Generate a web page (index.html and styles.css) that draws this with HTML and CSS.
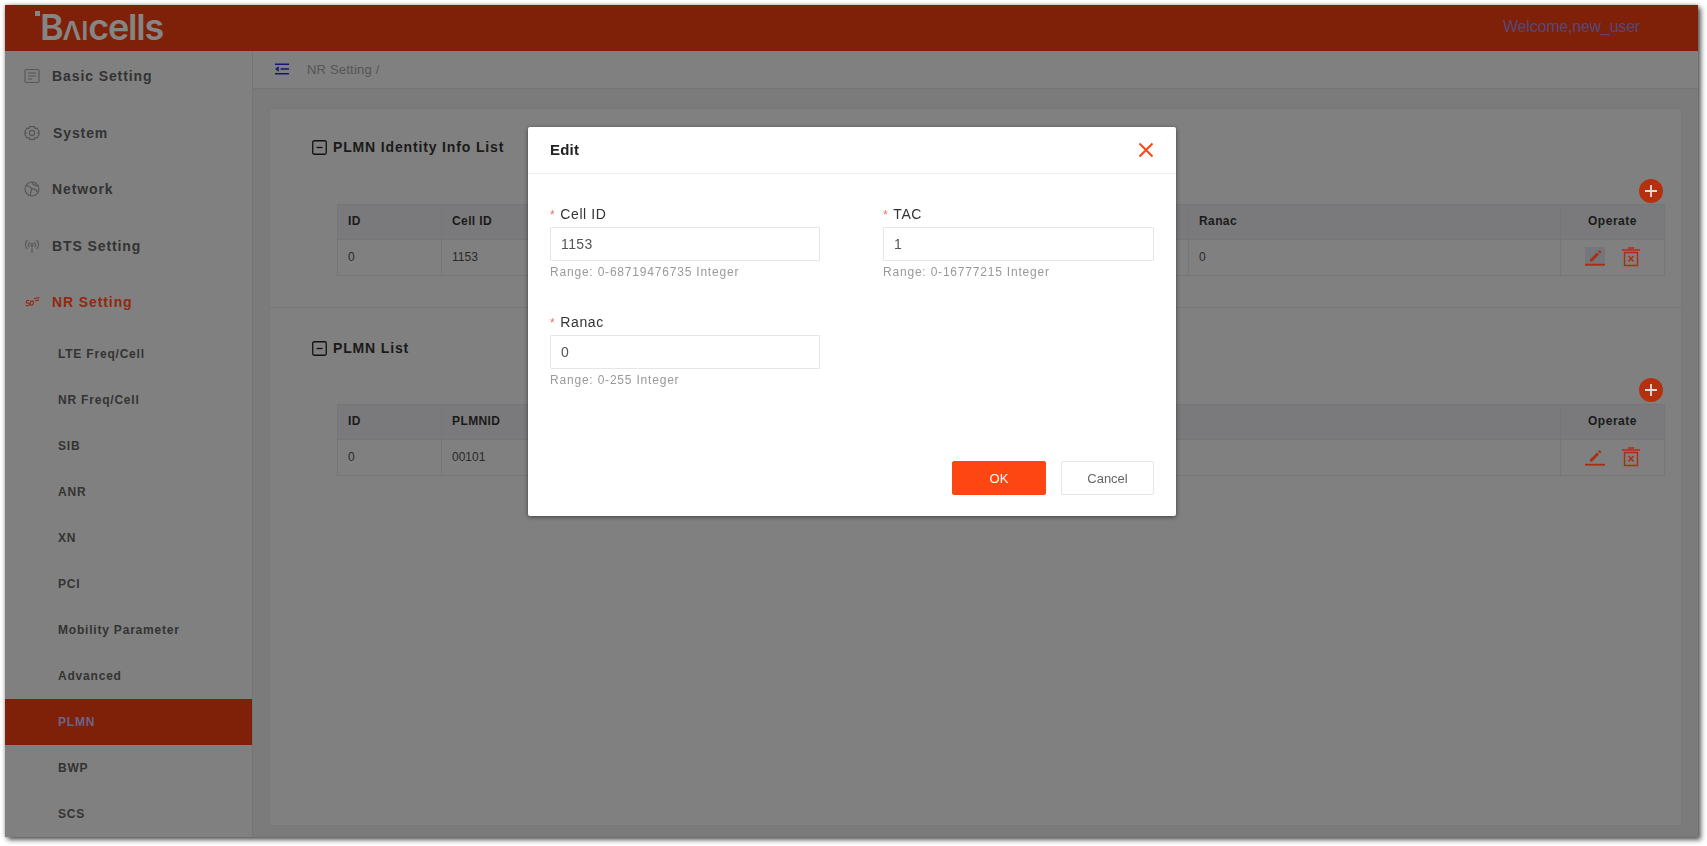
FILE: index.html
```html
<!DOCTYPE html>
<html lang="en">
<head>
<meta charset="utf-8">
<title>NR Setting</title>
<link rel="stylesheet" href="styles.css">
</head>
<body>
<div class="app">
  <header class="topbar">
    <div class="logo"><span class="logo-dot"></span><span class="logo-b">B</span><span class="logo-a">Λ</span><span class="logo-i">I</span>cells</div>
    <div class="welcome">Welcome,new_user</div>
  </header>
  <div class="body-row">
    <nav class="sidebar">
      <a class="nav-item"><svg class="nav-icon" viewBox="0 0 16 16"><rect x="1" y="1.5" width="14" height="13" rx="1.5"/><path d="M4 5h8M4 8h8M4 11h4"/></svg>Basic Setting</a>
      <a class="nav-item"><svg class="nav-icon" viewBox="0 0 16 16"><path d="M5.600 1.600h4.800l.7 2 2-.4 2.200 3.600-1.400 1.200 1.400 1.200-2.200 3.600-2-.4-.7 2H5.600l-.7-2-2 .4L.7 9.200 2.100 8 .7 6.800l2.200-3.600 2 .4z"/><circle cx="8" cy="8" r="2.600"/></svg><span class="nudge">System</span></a>
      <a class="nav-item"><svg class="nav-icon" viewBox="0 0 16 16"><circle cx="8" cy="8" r="7"/><path d="M2 4.500c3 .5 5 1.500 5.500 3.500S6 11 6.500 14.500M8 1.500c.5 2 2 3 6.500 3.500M7.500 8c2.500-.5 5 .5 6 3"/></svg>Network</a>
      <a class="nav-item"><svg class="nav-icon" viewBox="0 0 16 16"><circle cx="8" cy="6.500" r="1.200"/><path d="M8 7.500V15M5.600 3.800a3.600 3.600 0 0 0 0 5.400M10.400 3.800a3.600 3.600 0 0 1 0 5.400M3.400 2a6.200 6.200 0 0 0 0 9M12.600 2a6.200 6.200 0 0 1 0 9"/></svg>BTS Setting</a>
      <a class="nav-item is-open"><svg class="nav-icon icon-5g" viewBox="0 0 16 16"><path d="M5.500 6.500H2.800L2.300 9h2c1 0 1.200 1.200.8 2-.4.700-2 .9-3.600.4M9 7c-2-.6-2.700 1-2.800 2.300-.1 1.300.7 2.200 1.800 1.900 1.300-.300 1.800-2.200 1-4.200M10 5c2-1 3.500-1.200 5.500-1.200M11 7c1.500-.7 2.500-.9 4-.9"/></svg>NR Setting</a>
      <ul class="subnav">
        <li class="sub-item">LTE Freq/Cell</li>
        <li class="sub-item">NR Freq/Cell</li>
        <li class="sub-item">SIB</li>
        <li class="sub-item">ANR</li>
        <li class="sub-item">XN</li>
        <li class="sub-item">PCI</li>
        <li class="sub-item">Mobility Parameter</li>
        <li class="sub-item">Advanced</li>
        <li class="sub-item is-active">PLMN</li>
        <li class="sub-item">BWP</li>
        <li class="sub-item">SCS</li>
      </ul>
    </nav>
    <main class="main">
      <div class="crumbs">
        <svg class="collapse" viewBox="0 0 16 12"><path d="M0 1h15M6 6h9M0 11h15" /><path class="fill" d="M0 6l4-3v6z"/></svg>
        <span>NR Setting /</span>
      </div>
      <div class="content">
        <div class="card">
          <section class="section first">
            <h2 class="section-title"><svg class="minus" viewBox="0 0 15 15"><rect x=".75" y=".75" width="13.500" height="13.500" rx="1.500"/><path d="M4.500 7.500h6"/></svg>PLMN Identity Info List</h2>
            <div class="add-row"><span class="add"><svg viewBox="0 0 24 24"><path d="M12 6v12M6 12h12"/></svg></span></div>
            <table class="grid">
              <tr><th class="c-id">ID</th><th class="c-b">Cell ID</th><th>TAC</th><th class="c-r">Ranac</th><th class="c-op">Operate</th></tr>
              <tr><td>0</td><td>1153</td><td>1</td><td>0</td><td class="c-op ops"><svg class="pen" viewBox="0 0 20 19"><rect class="pen-bg" x="0" y="0" width="20" height="19"/><path class="pen-tip" d="M5 12.500l7-7 2 2-7 7H5zM13 4.500l1.500-1.500 2 2L15 6.500z"/><path class="pen-line" d="M0 17.700h20"/></svg><svg class="bin" viewBox="0 0 20 20"><path d="M1 3h18M7 1h6M3.500 5.500h13v13h-13zM7.500 9l5 5.500M12.500 9l-5 5.500"/></svg></td></tr>
            </table>
          </section>
          <section class="section second">
            <h2 class="section-title"><svg class="minus" viewBox="0 0 15 15"><rect x=".75" y=".75" width="13.500" height="13.500" rx="1.500"/><path d="M4.500 7.500h6"/></svg>PLMN List</h2>
            <div class="add-row"><span class="add"><svg viewBox="0 0 24 24"><path d="M12 6v12M6 12h12"/></svg></span></div>
            <table class="grid">
              <tr><th class="c-id">ID</th><th class="c-b2">PLMNID</th><th class="c-op">Operate</th></tr>
              <tr><td>0</td><td>00101</td><td class="c-op ops"><svg class="pen" viewBox="0 0 20 19"><path class="pen-tip" d="M5 12.500l7-7 2 2-7 7H5zM13 4.500l1.500-1.500 2 2L15 6.500z"/><path class="pen-line" d="M0 17.700h20"/></svg><svg class="bin" viewBox="0 0 20 20"><path d="M1 3h18M7 1h6M3.500 5.500h13v13h-13zM7.500 9l5 5.500M12.500 9l-5 5.500"/></svg></td></tr>
            </table>
          </section>
        </div>
      </div>
    </main>
  </div>
</div>

<div class="modal" role="dialog">
  <div class="modal-head">
    <span class="modal-title">Edit</span>
    <svg class="close" viewBox="0 0 16 16"><path d="M1.500 1.500l13 13M14.500 1.500l-13 13"/></svg>
  </div>
  <form class="modal-body">
    <div class="field">
      <label class="field-label"><span class="req">*</span>Cell ID</label>
      <input class="field-input" value="1153">
      <div class="hint">Range: 0-68719476735 Integer</div>
    </div>
    <div class="field">
      <label class="field-label"><span class="req">*</span>TAC</label>
      <input class="field-input" value="1">
      <div class="hint">Range: 0-16777215 Integer</div>
    </div>
    <div class="field">
      <label class="field-label"><span class="req">*</span>Ranac</label>
      <input class="field-input" value="0">
      <div class="hint">Range: 0-255 Integer</div>
    </div>
  </form>
  <div class="modal-foot">
    <button class="btn btn-ok" type="button">OK</button>
    <button class="btn btn-cancel" type="button">Cancel</button>
  </div>
</div>
</body>
</html>
```

FILE: styles.css
```css
* { box-sizing: border-box; }
html, body { height: 100%; overflow: hidden; }
body {
  margin: 0;
  padding: 5px 9px 9px 5px;
  background: #fff;
  font-family: "Liberation Sans", Arial, sans-serif;
  color: #333;
}
.app {
  height: 832px;
  display: flex;
  flex-direction: column;
  background: #808080;
  box-shadow: 0 0 4px rgba(0,0,0,.35), 3px 3px 5px rgba(0,0,0,.6);
  overflow: hidden;
}
.topbar {
  height: 46px;
  flex: none;
  background: #7f2108;
  display: flex;
  align-items: center;
  justify-content: space-between;
  padding: 0 58px 0 30px;
}
.logo {
  position: relative;
  font-family: Inter, "Liberation Sans", sans-serif;
  font-weight: 600;
  font-size: 36px;
  letter-spacing: -1.2px;
  color: #858585;
  line-height: 46px;
  padding-left: 5px;
  margin-top: 1px;
}
.logo-dot { position: absolute; left: 0; top: 7px; width: 5px; height: 5px; background: #858585; }
.logo-a, .logo-i { font-size: 26px; font-weight: 600; }
.logo-i { margin: 0 1px; }
.welcome { font-size: 16px; letter-spacing: -.2px; color: #57477a; margin-top: -3px; }

.body-row { flex: 1; display: flex; min-height: 0; }
.sidebar {
  width: 248px;
  flex: none;
  background: #808080;
  border-right: 1px solid #757575;
  display: flex;
  flex-direction: column;
  gap: 6px;
}
.nav-item {
  height: 50.5px;
  flex: none;
  display: flex;
  align-items: center;
  padding-left: 19px;
  font-size: 14px;
  font-weight: 700;
  letter-spacing: .9px;
  color: #333;
}
.nav-icon {
  width: 16px; height: 16px;
  margin-right: 12px;
  flex: none;
  fill: none;
  stroke: #555;
  stroke-width: 1.100;
}
.nudge { margin-left: 1px; }
.is-open { color: #942810; }
.icon-5g { stroke: #942810; }
.subnav { list-style: none; margin: -3px 0 0; padding: 0; }
.sub-item {
  height: 46px;
  line-height: 46px;
  padding-left: 53px;
  font-size: 12px;
  font-weight: 700;
  letter-spacing: .8px;
  color: #333;
}
.sub-item.is-active { background: #7f2108; color: #6d6488; }

.main { flex: 1; min-width: 0; display: flex; flex-direction: column; background: #7b7b7c; }
.crumbs {
  height: 38px;
  flex: none;
  background: #808080;
  border-bottom: 1px solid #747475;
  display: flex;
  align-items: center;
  padding-left: 22px;
  padding-bottom: 1px;
  gap: 17px;
  font-size: 13px;
  letter-spacing: .2px;
  color: #555;
}
.collapse { width: 15px; height: 12px; fill: none; stroke: #14147a; stroke-width: 1.600; }
.collapse .fill { fill: #14147a; stroke: none; }
.content { flex: 1; min-height: 0; padding: 19px 16px 11px 16px; }
.card {
  height: 100%;
  background: #808080;
  border: 1px solid #787878;
  border-radius: 2px;
}
.section { padding: 30px 16px 0 67px; height: 199px; }
.section.first { border-bottom: 1px solid #767676; }
.section.second { padding-top: 32px; }
.section-title {
  display: flex;
  align-items: center;
  gap: 6px;
  margin: 0;
  height: 16px;
  font-size: 14px;
  font-weight: 700;
  letter-spacing: .85px;
  color: #1a1a1a;
  margin-left: -25px;
}
.minus { width: 15px; height: 15px; fill: none; stroke: #111; stroke-width: 1.300; }
.add-row { height: 43px; display: flex; justify-content: flex-end; align-items: flex-start; padding-right: 2px; margin-top: 6px; padding-top: 18px; }
.second .add-row { margin-top: 5px; padding-top: 17px; }
.add { width: 24px; height: 24px; flex: none; border-radius: 50%; background: #b5300f; display: block; }
.add svg { display: block; width: 24px; height: 24px; fill: none; stroke: #ddd; stroke-width: 1.800; }
.grid { width: 100%; border-collapse: collapse; table-layout: fixed; font-size: 12px; }
.grid th, .grid td { border: 1px solid #757678; padding: 0 0 2px 10px; text-align: left; color: #2a2a2a; }
.grid th { height: 35px; background: #7a7a7c; font-weight: 700; letter-spacing: .4px; color: #1a1a1a; }
.grid td { height: 36px; }
.c-id { width: 104px; }
.c-b { width: 300px; }
.c-r { width: 372px; }
.grid .c-op { width: 104px; text-align: center; padding: 0 0 2px; letter-spacing: .55px; }
.ops svg { vertical-align: middle; }
.pen { width: 20px; height: 19px; margin-right: 16px; }
.pen-bg { fill: #74767c; }
.pen-tip { fill: #aa2e10; }
.pen-line { stroke: #aa2e10; stroke-width: 1.800; }
.bin { width: 20px; height: 20px; fill: none; stroke: #aa2e10; stroke-width: 1.400; }

.modal {
  position: fixed;
  left: 528px;
  top: 127px;
  width: 648px;
  height: 389px;
  background: #fff;
  border-radius: 2px;
  box-shadow: 0 1px 4px rgba(0,0,0,.5);
  display: flex;
  flex-direction: column;
}
.modal-head {
  height: 47px;
  flex: none;
  border-bottom: 1px solid #eceef2;
  display: flex;
  align-items: center;
  justify-content: space-between;
  padding: 0 22px;
}
.modal-title { font-size: 15px; font-weight: 700; letter-spacing: .2px; color: #222; margin-top: -2px; }
.close { width: 16px; height: 16px; fill: none; stroke: #fe4612; stroke-width: 2; }
.modal-body {
  display: grid;
  grid-template-columns: 270px 271px;
  column-gap: 63px;
  row-gap: 32px;
  padding: 30px 22px 0;
  align-content: start;
  flex: 1;
}
.field-label { display: block; height: 20px; line-height: 20px; font-size: 14px; color: #333; letter-spacing: .6px; margin-bottom: 3px; }
.req { color: #f56c6c; margin-right: 5px; font-size: 12px; }
.field-input {
  display: block;
  width: 100%;
  height: 34px;
  border: 1px solid #e4e6ec;
  border-radius: 1px;
  padding: 0 10px;
  font: 14px "Liberation Sans", Arial, sans-serif;
  letter-spacing: .4px;
  color: #555;
  outline: none;
}
.hint { margin-top: 3px; height: 16px; line-height: 16px; font-size: 12px; letter-spacing: .8px; color: #999; }
.modal-foot { display: flex; justify-content: flex-end; gap: 15px; padding: 0 22px 21px; }
.btn { height: 34px; width: 94px; border-radius: 2px; font: 13px "Liberation Sans", Arial, sans-serif; }
.btn-ok { background: #fe4612; border: 1px solid #fe4612; color: #fff; }
.btn-cancel { width: 93px; background: #fff; border: 1px solid #e4e6ec; color: #666; }
```
